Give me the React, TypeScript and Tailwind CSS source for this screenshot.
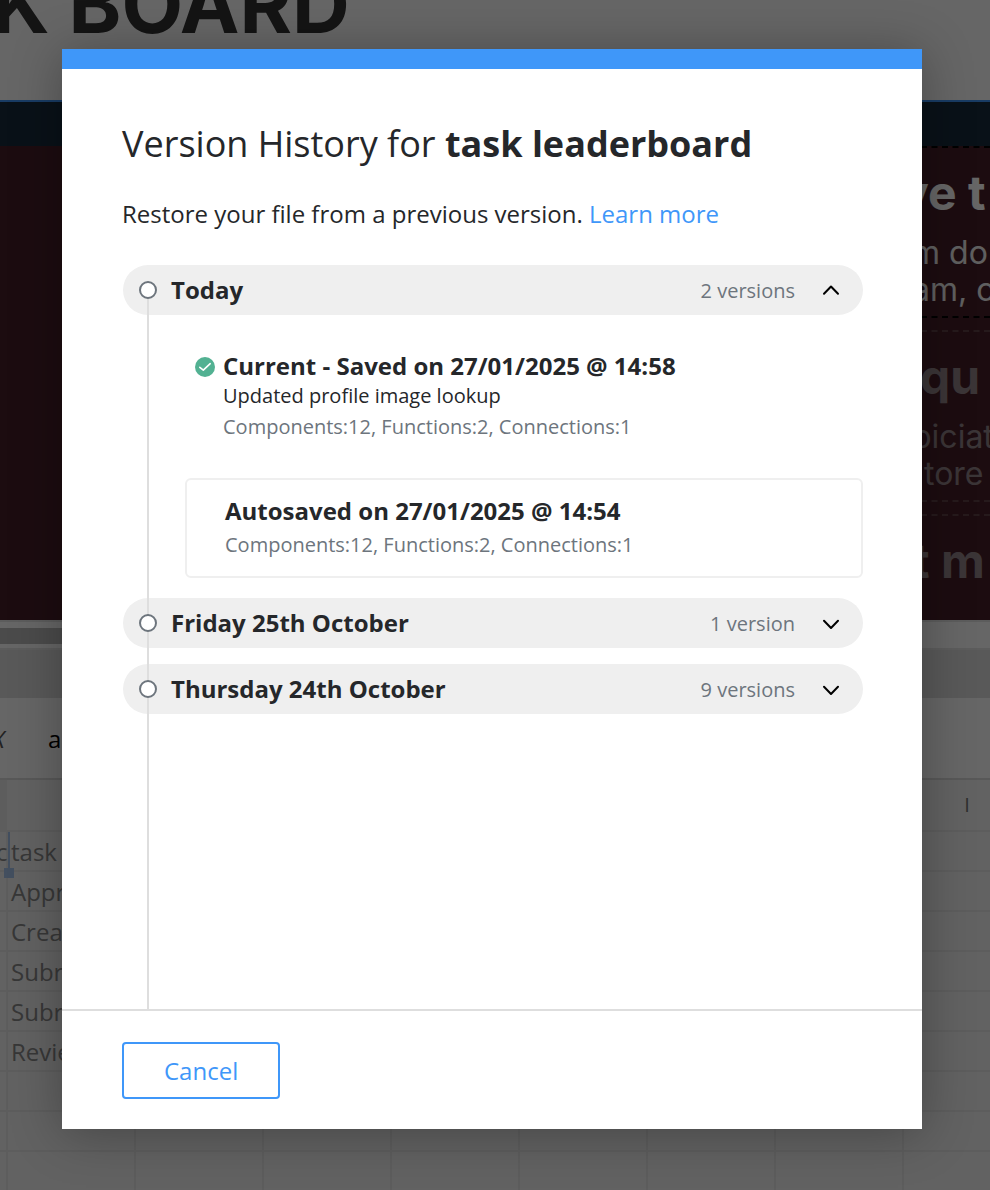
import { useState } from "react";

type Version = {
  title: string;
  note?: string;
  stats: string;
  current?: boolean;
};

type Day = {
  label: string;
  count: string;
  versions: Version[];
};

const days: Day[] = [
  {
    label: "Today",
    count: "2 versions",
    versions: [
      {
        title: "Current - Saved on 27/01/2025 @ 14:58",
        note: "Updated profile image lookup",
        stats: "Components:12, Functions:2, Connections:1",
        current: true,
      },
      {
        title: "Autosaved on 27/01/2025 @ 14:54",
        stats: "Components:12, Functions:2, Connections:1",
      },
    ],
  },
  { label: "Friday 25th October", count: "1 version", versions: [] },
  { label: "Thursday 24th October", count: "9 versions", versions: [] },
];

const rows = ["task", "Appr", "Crea", "Subr", "Subr", "Revie", "", "", ""];
const columns = [1, 2, 3, 4, 5, 6, 7, 8];

function Chevron({ open }: { open: boolean }) {
  return (
    <svg width="16" height="10" viewBox="0 0 16 10" fill="none" stroke="black" strokeWidth="2" strokeLinecap="round" strokeLinejoin="round" overflow="visible" aria-hidden="true">
      <path d={open ? "M1 8.8L8 1.5L15 8.8" : "M1 2.8L8 10L15 2.8"} />
    </svg>
  );
}

function VersionCard({ version }: { version: Version }) {
  if (version.current) {
    return (
      <div className="flex gap-2 pl-[72px] pt-[34px] pb-[33px]">
        <svg width="20" height="20" viewBox="0 0 20 20" fill="none" className="mt-2 shrink-0" aria-hidden="true">
          <circle cx="10" cy="10" r="10" fill="#52b192" />
          <path d="M4.8 10.3L8.3 13.2L15.2 6.7" stroke="white" strokeWidth="1.6" strokeLinecap="round" strokeLinejoin="round" />
        </svg>
        <div>
          <h3 className="text-2xl leading-[34px] font-bold">{version.title}</h3>
          <p className="text-xl leading-[26px]">{version.note}</p>
          <p className="text-xl leading-9 text-[#6d757d]">{version.stats}</p>
        </div>
      </div>
    );
  }

  return (
    <div className="ml-[62px] mb-1 rounded-md border-2 border-[#efefef] px-[38px] py-[14px]">
      <h3 className="text-2xl leading-[34px] font-bold">{version.title}</h3>
      <p className="text-xl leading-[34px] text-[#6d757d]">{version.stats}</p>
    </div>
  );
}

function DayGroup({ day, defaultOpen }: { day: Day; defaultOpen: boolean }) {
  const [open, setOpen] = useState(defaultOpen);

  return (
    <section>
      <button
        type="button"
        aria-expanded={open}
        onClick={() => setOpen(!open)}
        className="flex h-[50px] w-full items-center rounded-full bg-[#efefef] pl-4 pr-6 text-left"
      >
        <span className="relative z-20 mr-[14px] size-[18px] shrink-0 rounded-full border-2 border-[#6d757d] bg-white" />
        <span className="flex-1 text-2xl font-bold">{day.label}</span>
        <span className="mr-7 pt-[2px] text-xl text-[#6d757d]">{day.count}</span>
        <Chevron open={open} />
      </button>
      {open && day.versions.map((version) => <VersionCard key={version.title} version={version} />)}
    </section>
  );
}

function Preview() {
  return (
    <div className="font-[Inter,sans-serif]">
      <header className="h-[102px] overflow-hidden border-b-2 border-[#3f97f9]">
        <p className="-mt-9 -ml-2 text-[80px] leading-[80px] font-bold whitespace-nowrap text-[#333]">K BOARD</p>
      </header>
      <div className="h-11 bg-[#182b3d]" />
      <div className="flex h-[474px] justify-end overflow-hidden bg-[#482029]">
        <div className="flex w-[90px] flex-col gap-3 whitespace-nowrap">
          <div className="h-[172px] shrink-0 overflow-hidden border-y-2 border-dashed border-black pt-4 text-white">
            <p className="mb-3 text-[48px] leading-[58px] font-bold">ve t</p>
            <p className="pl-3 text-[32px] leading-[37px] text-[#eee]">m do</p>
            <p className="pl-3 text-[32px] leading-[37px] text-[#eee]">am, c</p>
          </div>
          <div className="h-[172px] shrink-0 overflow-hidden border-y-2 border-dashed border-[#5f4248] pt-4 text-[#94858a]">
            <p className="mb-3 pl-5 text-[48px] leading-[58px] font-bold">qu</p>
            <p className="pl-3 text-[32px] leading-[37px]">piciat</p>
            <p className="pl-6 text-[32px] leading-[37px]">tore</p>
          </div>
          <div className="h-[172px] shrink-0 overflow-hidden border-y-2 border-dashed border-[#5f4248] pt-4 text-[#94858a]">
            <p className="pl-3 text-[48px] leading-[58px] font-bold">t m</p>
          </div>
        </div>
      </div>
    </div>
  );
}

function Sheet() {
  return (
    <div>
      <div className="border-y-2 border-[#e6e6e6] bg-white pt-[6px] pb-1">
        <div className="h-4 w-1/2 bg-[#bbb]" />
      </div>
      <div className="h-12 bg-[#dedede]" />
      <div className="flex h-[82px] items-center gap-10 border-b-2 border-[#dcdcdc] bg-white pt-[2px] text-2xl">
        <span className="-ml-2 w-4 text-[#555] italic">X</span>
        <span className="text-black">a</span>
      </div>
      <table className="w-full table-fixed border-collapse bg-[#f5f5f5] text-2xl text-[#8a8a8a]">
        <colgroup>
          <col className="w-[7px]" />
          {columns.map((column) => (
            <col key={column} className="w-32" />
          ))}
        </colgroup>
        <thead>
          <tr className="h-[51px] text-xl">
            <th className="bg-[#e9e9e9]" />
            <th colSpan={7} />
            <th className="font-normal text-[#777]">I</th>
          </tr>
        </thead>
        <tbody>
          {rows.map((row, index) => (
            <tr key={index} className="h-10">
              <td className="border-y-2 border-r-2 border-[#e8e8e8] p-0 pt-[2px] leading-9">
                {index === 0 && <span className="-ml-1 block">c</span>}
              </td>
              {columns.map((column) => (
                <td key={column} className="relative border-2 border-[#e8e8e8] p-0 pt-[2px] pl-[3px] leading-9">
                  {column === 1 && row}
                  {column === 1 && index === 0 && (
                    <>
                      <span className="absolute top-0 left-0 h-9 w-[2px] bg-[#a9c6ee]" />
                      <span className="absolute -bottom-2 -left-1 size-[10px] bg-[#a9c6ee]" />
                    </>
                  )}
                </td>
              ))}
            </tr>
          ))}
        </tbody>
      </table>
    </div>
  );
}

export default function App() {
  return (
    <div className="relative h-screen overflow-hidden bg-white font-[Open_Sans,sans-serif] text-[#25272a]">
      <div aria-hidden="true">
        <Preview />
        <Sheet />
      </div>

      {/* Overlay and dialog */}
      <div className="absolute inset-0 z-10 flex justify-center bg-black/60 pt-[49px] pr-[68px] pb-[61px] pl-[62px]">
        <div role="dialog" aria-labelledby="dialog-title" className="flex w-full max-w-[860px] flex-col border-t-[20px] border-[#3f97f9] bg-white shadow-[0_4px_48px_rgba(0,0,0,0.3)]">
          <div className="flex min-h-0 flex-1 flex-col">
            <div className="px-15 pt-12">
              <h1 id="dialog-title" className="text-4xl leading-[54px]">
                Version History for <strong className="font-bold">task leaderboard</strong>
              </h1>
              <p className="mt-6 text-2xl leading-[38px]">
                Restore your file from a previous version.{" "}
                <a href="#learn-more" className="text-[#3f97f9]">Learn more</a>
              </p>
            </div>
            <div className="relative mt-8 flex-1 pr-[59px] pl-[61px]">
              <span className="absolute top-[25px] bottom-0 left-[85px] z-10 w-[2px] bg-[#dedede]" />
              <div className="flex flex-col gap-4">
                {days.map((day, index) => (
                  <DayGroup key={day.label} day={day} defaultOpen={index === 0} />
                ))}
              </div>
            </div>
          </div>
          <footer className="border-t-2 border-[#dedede] px-15 pt-[31px] pb-[30px]">
            <button type="button" className="h-[57px] rounded border-2 border-[#3f97f9] px-10 text-2xl text-[#3f97f9]">
              Cancel
            </button>
          </footer>
        </div>
      </div>
    </div>
  );
}
